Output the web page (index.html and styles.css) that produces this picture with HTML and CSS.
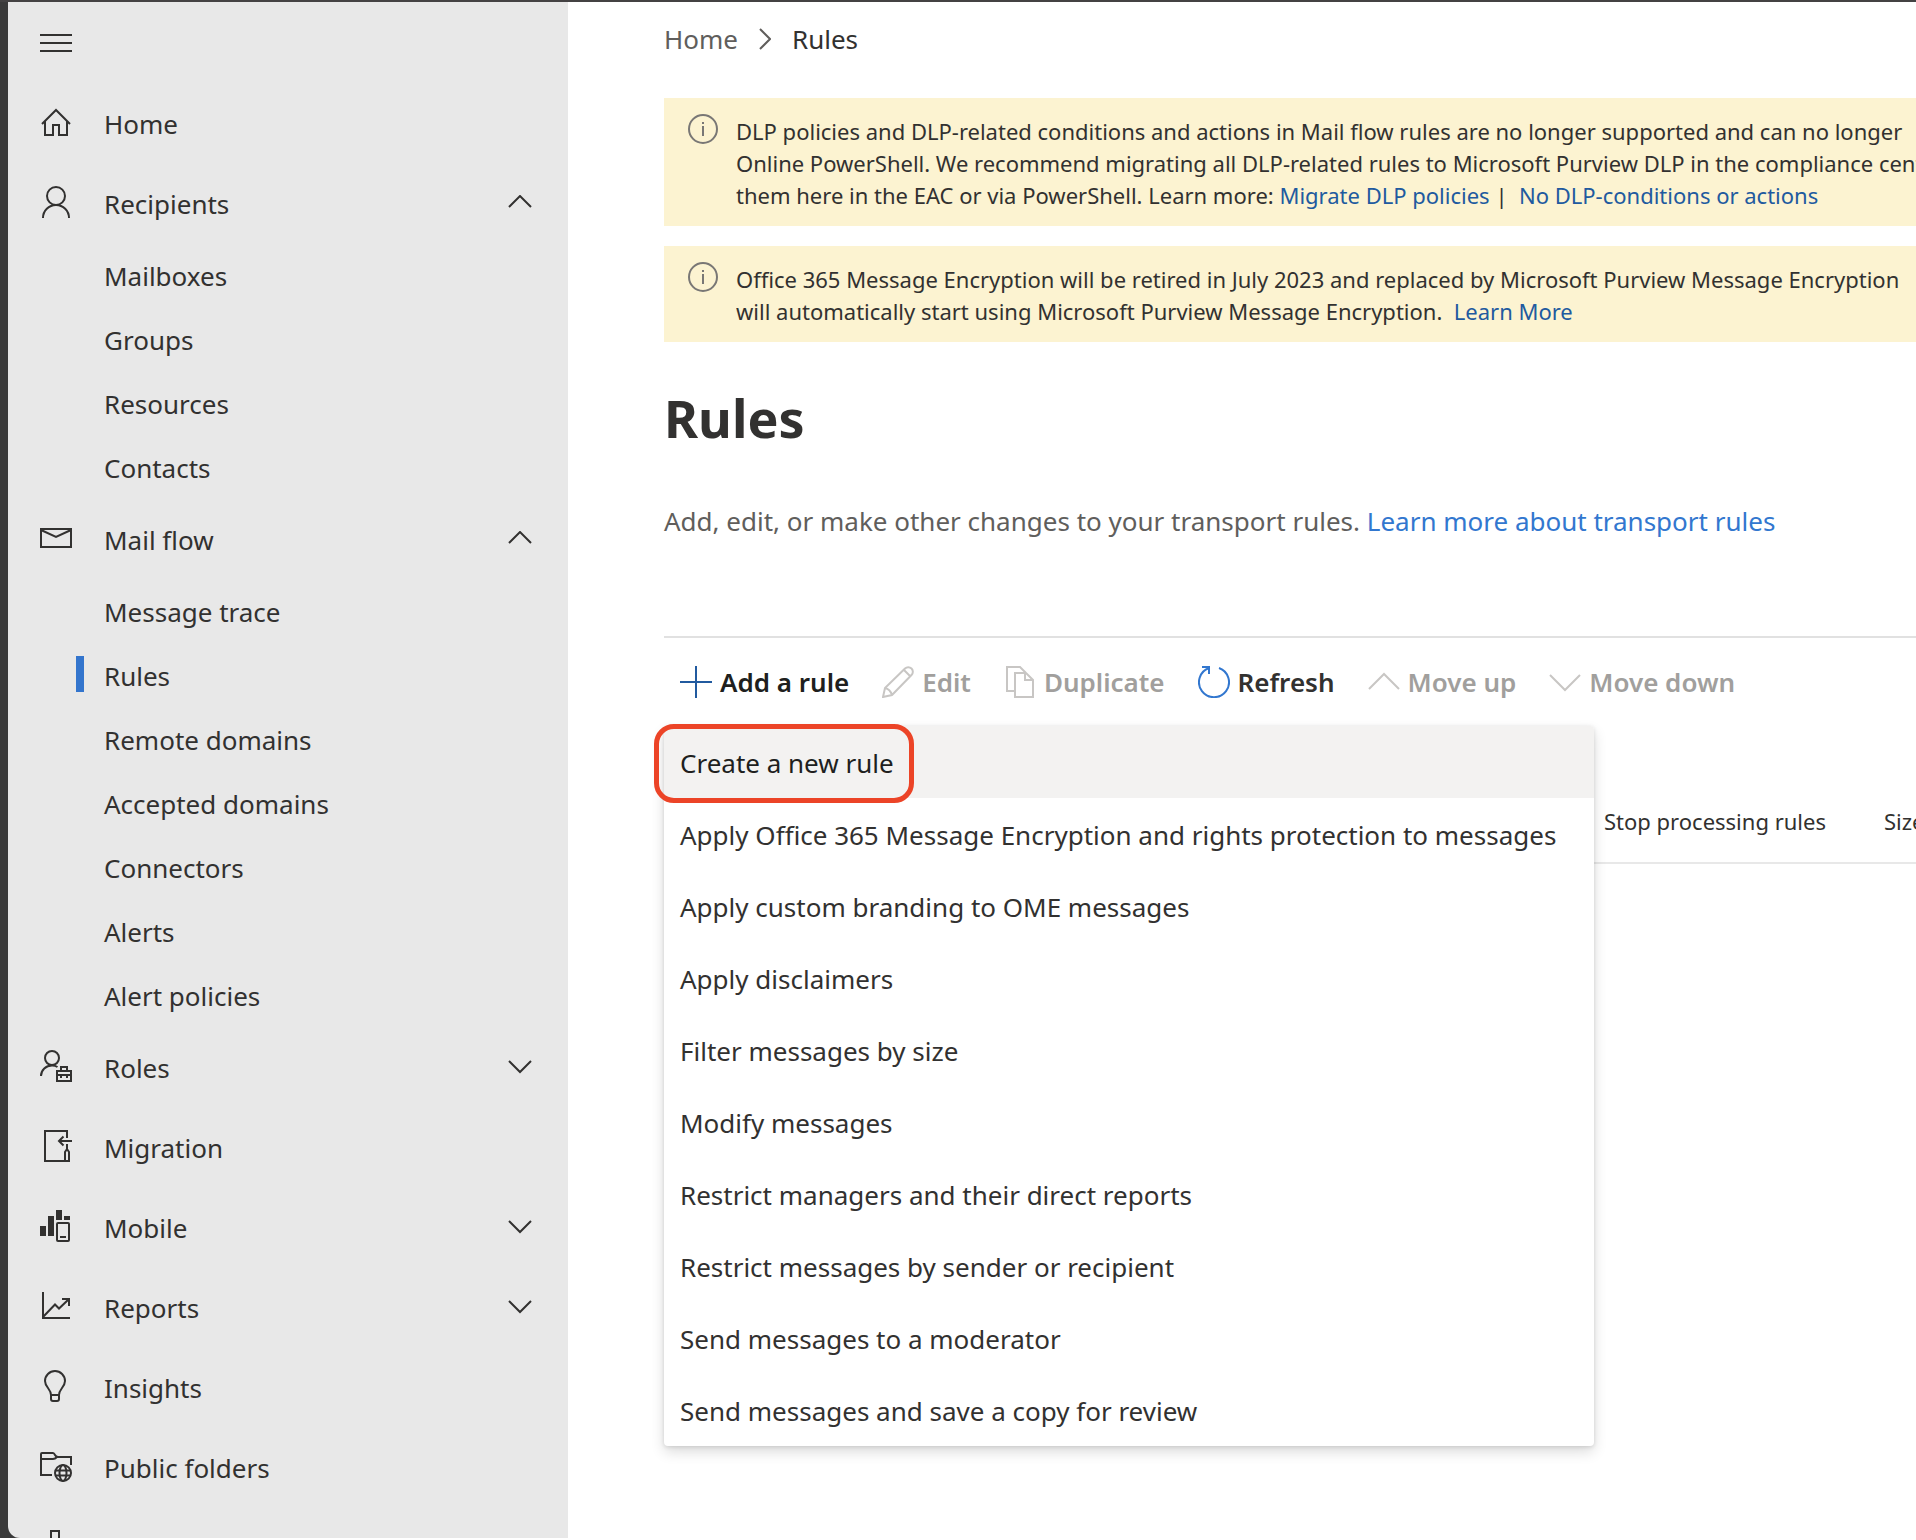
FILE: index.html
```html
<!DOCTYPE html>
<html lang="en">
<head>
<meta charset="utf-8">
<title>Rules - Exchange admin center</title>
<link rel="stylesheet" href="styles.css">
</head>
<body>
<div class="window">
<nav class="sidebar" aria-label="Main">
  <button class="menu-toggle" type="button" aria-label="Collapse navigation">
    <svg class="icon" viewBox="0 0 32 36"><path d="M0 10h32M0 18h32M0 26h32"/></svg>
  </button>
  <a class="nav-item" href="#home">
    <svg class="icon" viewBox="0 0 32 36"><path d="M2 18 16 4l14 14M5 15v14h8V19h6v10h8V15"/></svg>
    <span class="nav-label">Home</span>
  </a>
  <button class="nav-item" type="button" aria-expanded="true">
    <svg class="icon" viewBox="0 0 32 36"><circle cx="16" cy="10" r="9"/><path d="M3 32a13 13 0 0 1 26 0"/></svg>
    <span class="nav-label">Recipients</span>
    <svg class="chevron" viewBox="0 0 24 18"><path d="M1 12 12 1l11 11"/></svg>
  </button>
  <a class="nav-child" href="#mailboxes">Mailboxes</a>
  <a class="nav-child" href="#groups">Groups</a>
  <a class="nav-child" href="#resources">Resources</a>
  <a class="nav-child" href="#contacts">Contacts</a>
  <button class="nav-item" type="button" aria-expanded="true">
    <svg class="icon" viewBox="0 0 32 36"><path d="M1 7h30v18H1zM1 8l15 7 15-7"/></svg>
    <span class="nav-label">Mail flow</span>
    <svg class="chevron" viewBox="0 0 24 18"><path d="M1 12 12 1l11 11"/></svg>
  </button>
  <a class="nav-child" href="#trace">Message trace</a>
  <a class="nav-child nav-child--active" href="#rules" aria-current="page">Rules</a>
  <a class="nav-child" href="#remote">Remote domains</a>
  <a class="nav-child" href="#accepted">Accepted domains</a>
  <a class="nav-child" href="#connectors">Connectors</a>
  <a class="nav-child" href="#alerts">Alerts</a>
  <a class="nav-child" href="#policies">Alert policies</a>
  <button class="nav-item" type="button" aria-expanded="false">
    <svg class="icon" viewBox="0 0 32 36"><circle cx="12" cy="8" r="7"/><path d="M1 26c0-6 5-10.500 11-10.500 2 0 4 .5 5.500 1.500M17 21h14v10H17zM17 25h14M21 21v-4h6v4M21 25v3M27 25v3"/></svg>
    <span class="nav-label">Roles</span>
    <svg class="chevron" viewBox="0 0 24 18"><path d="m1 2 11 11L23 2"/></svg>
  </button>
  <a class="nav-item" href="#migration">
    <svg class="icon" viewBox="0 0 32 36"><path d="M27 8V1H5v30h22M32 11H19M23.500 6.500 19 11l4.500 4.500M27 14v5M25 31v-9l2-3 2 3v9z"/></svg>
    <span class="nav-label">Migration</span>
  </a>
  <button class="nav-item" type="button" aria-expanded="false">
    <svg class="icon" viewBox="0 0 32 36"><path class="solid" d="M0 16h6v10H0zM8 6h6v20H8zM16 0h6v10h-6zM24 6h6v4h-6z"/><rect x="17" y="13" width="12" height="18" rx="1"/><path d="M20 27h6"/></svg>
    <span class="nav-label">Mobile</span>
    <svg class="chevron" viewBox="0 0 24 18"><path d="m1 2 11 11L23 2"/></svg>
  </button>
  <button class="nav-item" type="button" aria-expanded="false">
    <svg class="icon" viewBox="0 0 32 36"><path d="M3 2v26h27M3 27l12-12.500 4 4L29 9M22 9h7v7"/></svg>
    <span class="nav-label">Reports</span>
    <svg class="chevron" viewBox="0 0 24 18"><path d="m1 2 11 11L23 2"/></svg>
  </button>
  <a class="nav-item" href="#insights">
    <svg class="icon" viewBox="0 0 32 36"><path d="M11 25c0-6-6-8-6-14a10 10 0 0 1 20 0c0 6-6 8-6 14v4a2 2 0 0 1-2 2h-4a2 2 0 0 1-2-2zM11 25h8"/></svg>
    <span class="nav-label">Insights</span>
  </a>
  <a class="nav-item" href="#folders">
    <svg class="icon" viewBox="0 0 32 36"><path d="M12 25H1V4q0-1 1-1h11q1 0 2 2t3 2h13v8M1 9h12q2 0 4-2"/><circle cx="23" cy="23" r="8"/><ellipse cx="23" cy="23" rx="3.500" ry="8"/><path d="M15 20.500h16M15 25.500h16"/></svg>
    <span class="nav-label">Public folders</span>
  </a>
  <a class="nav-item" href="#organization">
    <svg class="icon" viewBox="0 0 32 36"><path d="M11 1h8v8h-8zM15 9v7M5 22v-6h20v6M1 22h8v8H1zM21 22h8v8h-8z"/></svg>
    <span class="nav-label">Organization</span>
  </a>
</nav>

<main class="main">
  <nav class="breadcrumb" aria-label="Breadcrumb">
    <a class="breadcrumb-link" href="#home">Home</a>
    <svg class="breadcrumb-chevron" viewBox="0 0 12 22"><path d="m1 1 10 10L1 21"/></svg>
    <span>Rules</span>
  </nav>

  <div class="banners">
    <section class="banner">
      <svg class="info" viewBox="0 0 30 30"><circle cx="15" cy="15" r="14"/><path d="M15 12v10M15 8v2"/></svg>
      <p class="banner-text">DLP policies and DLP-related conditions and actions in Mail flow rules are no longer supported and can no longer<br>Online PowerShell. We recommend migrating all DLP-related rules to Microsoft Purview DLP in the compliance center<br>them here in the EAC or via PowerShell. Learn more: <a href="#migrate">Migrate DLP policies</a> |&nbsp; <a href="#no-dlp">No DLP-conditions or actions</a></p>
    </section>
    <section class="banner">
      <svg class="info" viewBox="0 0 30 30"><circle cx="15" cy="15" r="14"/><path d="M15 12v10M15 8v2"/></svg>
      <p class="banner-text">Office 365 Message Encryption will be retired in July 2023 and replaced by Microsoft Purview Message Encryption<br>will automatically start using Microsoft Purview Message Encryption.&nbsp; <a href="#learn">Learn More</a></p>
    </section>
  </div>

  <h1 class="title">Rules</h1>
  <p class="description">Add, edit, or make other changes to your transport rules. <a href="#transport">Learn more about transport rules</a></p>

  <div class="toolbar" role="toolbar" aria-label="Rule actions">
    <button class="command command--add" type="button" aria-expanded="true">
      <svg class="command-icon" viewBox="0 0 32 32"><path d="M16 0v32M0 16h32"/></svg>Add a rule
    </button>
    <button class="command" type="button" disabled>
      <svg class="command-icon" viewBox="0 0 32 32"><path d="m1 31 2-9L23 2.500a4.500 4.500 0 0 1 6.500 6.500L10 29zM3 22q5 1 7 7M22 4l6 6"/></svg>Edit
    </button>
    <button class="command" type="button" disabled>
      <svg class="command-icon" viewBox="0 0 32 32"><path d="M10 25H3V1h13l6 6M11 7h11l7 7v17H11zM21 7v7h8"/></svg>Duplicate
    </button>
    <button class="command command--refresh" type="button">
      <svg class="command-icon" viewBox="0 0 32 32"><path d="M21 2a15 15 0 1 1-10 0M4 1h7v7"/></svg>Refresh
    </button>
    <button class="command" type="button" disabled>
      <svg class="command-icon" viewBox="0 0 32 32"><path d="M1 23 16 8l15 15"/></svg>Move up
    </button>
    <button class="command" type="button" disabled>
      <svg class="command-icon" viewBox="0 0 32 32"><path d="m1 9 15 15L31 9"/></svg>Move down
    </button>
    <div class="dropdown" role="menu" aria-label="Add a rule">
      <button class="option option--hover" type="button" role="menuitem">Create a new rule</button>
      <button class="option" type="button" role="menuitem">Apply Office 365 Message Encryption and rights protection to messages</button>
      <button class="option" type="button" role="menuitem">Apply custom branding to OME messages</button>
      <button class="option" type="button" role="menuitem">Apply disclaimers</button>
      <button class="option" type="button" role="menuitem">Filter messages by size</button>
      <button class="option" type="button" role="menuitem">Modify messages</button>
      <button class="option" type="button" role="menuitem">Restrict managers and their direct reports</button>
      <button class="option" type="button" role="menuitem">Restrict messages by sender or recipient</button>
      <button class="option" type="button" role="menuitem">Send messages to a moderator</button>
      <button class="option" type="button" role="menuitem">Send messages and save a copy for review</button>
      <div class="highlight"></div>
    </div>
  </div>

  <table class="rules">
    <thead>
      <tr><td class="col-rule"></td><th class="col-stop" scope="col">Stop processing rules</th><th scope="col">Size</th></tr>
    </thead>
  </table>
</main>
</div>
</body>
</html>
```
FILE: styles.css
```css
* {
  box-sizing: border-box;
}

body {
  margin: 0;
  height: 100vh;
  overflow: hidden;
  background: #fff;
  color: #323130;
  font: 26px/40px "Noto Sans", "Open Sans", sans-serif;
}

button {
  border: 0;
  margin: 0;
  padding: 0;
  background: none;
  color: inherit;
  font: inherit;
  text-align: left;
}

a {
  color: inherit;
  text-decoration: none;
}

svg {
  display: block;
  flex: none;
  fill: none;
  stroke: currentColor;
  stroke-width: 2;
}

.window {
  display: flex;
  height: calc(100vh - 2px);
  overflow: hidden;
  border-top: 2px solid #444243;
  background: linear-gradient(to right, #3a3a3a 60px, #fff 60px);
}

/* Sidebar */
.sidebar {
  display: flex;
  flex: none;
  flex-direction: column;
  width: 560px;
  margin-left: 8px;
  overflow: hidden;
  border-bottom-left-radius: 12px;
  background: #e8e8e8;
}

.menu-toggle {
  display: flex;
  flex: none;
  align-items: center;
  height: 82px;
  padding-left: 32px;
}

.icon {
  width: 32px;
  height: 36px;
}

.icon .solid {
  fill: currentColor;
  stroke: none;
}

.nav-item {
  display: flex;
  flex: none;
  align-items: center;
  gap: 32px;
  height: 80px;
  padding: 0 36px 0 32px;
}

.nav-label {
  flex: 1;
}

.chevron {
  width: 24px;
  height: 18px;
}

.nav-child {
  position: relative;
  flex: none;
  height: 64px;
  padding-left: 96px;
  line-height: 64px;
}

.nav-child--active::before {
  content: "";
  position: absolute;
  top: 12px;
  left: 68px;
  width: 8px;
  height: 36px;
  background: #3375cd;
}

/* Main column */
.main {
  flex: 1;
  min-width: 0;
  overflow: hidden;
  padding-left: 96px;
  background: #fff;
}

.breadcrumb {
  display: flex;
  align-items: center;
  gap: 21px;
  padding: 17px 0 39px;
}

.breadcrumb-link {
  color: #605e5c;
}

.breadcrumb-chevron {
  width: 12px;
  height: 22px;
  color: #605e5c;
}

.banners {
  display: flex;
  flex-direction: column;
  gap: 20px;
}

.banner {
  display: flex;
  gap: 18px;
  padding: 16px 0 15px 24px;
  background: #fcf3d1;
}

.info {
  width: 30px;
  height: 30px;
  color: #797775;
}

.banner-text {
  flex: 1;
  margin: 0;
  padding-top: 1px;
  overflow: hidden;
  font-size: 22px;
  line-height: 32px;
  white-space: nowrap;
}

.banner-text a {
  color: #215a9f;
}

.title {
  margin: 40px 0 47px;
  font-size: 52px;
  font-weight: 700;
  line-height: 72px;
}

.description {
  margin: 0 0 95px;
  color: #605e5c;
  white-space: nowrap;
}

.description a {
  color: #3277cf;
}

/* Command bar */
.toolbar {
  position: relative;
  display: flex;
  align-items: center;
  gap: 33px;
  height: 90px;
  padding-left: 16px;
  border-top: 2px solid #e1e1e1;
}

.command {
  display: flex;
  align-items: center;
  gap: 8px;
  font-weight: 600;
  white-space: nowrap;
}

.command:disabled {
  color: #a19f9d;
}

.command:disabled .command-icon {
  color: #c8c6c4;
}

.command-icon {
  width: 32px;
  height: 32px;
}

.command--add {
  color: #201f1e;
}

.command--add .command-icon {
  color: #215a9f;
}

.command--refresh .command-icon {
  color: #3277cf;
}

.dropdown {
  position: absolute;
  top: 100%;
  left: 0;
  z-index: 1;
  width: 930px;
  border-radius: 4px;
  background: #fff;
  box-shadow: 0 6px 14px rgba(0, 0, 0, 0.14), 0 1px 4px rgba(0, 0, 0, 0.12);
}

.option {
  display: block;
  width: 100%;
  height: 72px;
  padding: 2px 16px 0;
  white-space: nowrap;
}

.option--hover {
  border-radius: 4px 4px 0 0;
  background: #f3f2f1;
  color: #201f1e;
}

.highlight {
  position: absolute;
  top: -2px;
  left: -10px;
  width: 260px;
  height: 79px;
  border: 5px solid #ec4427;
  border-radius: 20px;
  pointer-events: none;
}

/* Rules table */
.rules {
  width: 100%;
  margin-top: 53px;
  border-collapse: collapse;
  table-layout: fixed;
  font-size: 22px;
}

.rules th,
.rules td {
  height: 84px;
  padding: 0;
  border-bottom: 2px solid #e8e8e8;
  font-weight: 400;
  text-align: left;
  white-space: nowrap;
}

.rules .col-rule {
  width: 940px;
}

.rules .col-stop {
  width: 280px;
}
```
